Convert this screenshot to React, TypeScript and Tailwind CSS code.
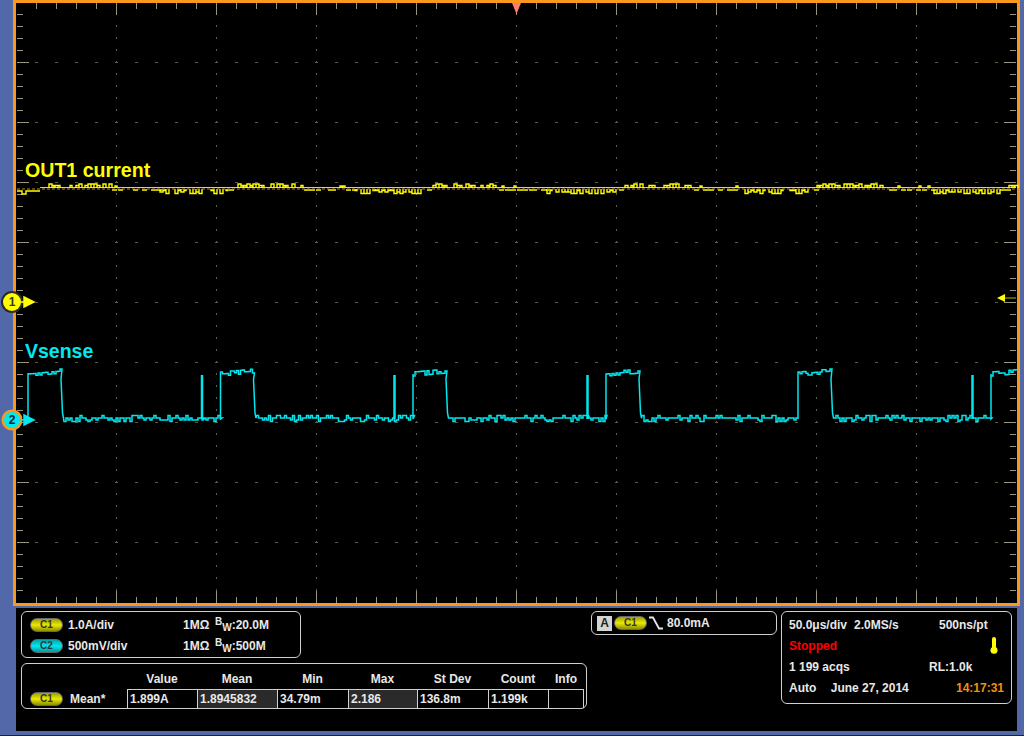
import type { ReactNode } from "react";

const font = "font-['Liberation_Sans',Arial,sans-serif]";

// repeatable noise so the traces come out the same on every load
function noise(n: number) {
  const s = Math.sin(n * 127.1 + 11.7) * 43758.5453;
  return s - Math.floor(s);
}

// yellow trace: a thin base line with short bursts above and below it
function yellowBursts() {
  let d = "M17 191H22V194H26V191H40";
  for (let x = 40; x < 1016; x += 3) {
    const p = ((x - 44) % 193 + 193) % 193;
    const r = noise(x);
    const w = r > 0.5 ? 3 : 2;
    if (p < 66) {
      if (r > 0.3) {
        const y = r > 0.7 ? 184 : 185.5;
        d += `M${x} 188V${y}H${x + w}V188`;
      }
    } else if (p >= 116 && p < 184) {
      if (r > 0.25) {
        const y = r > 0.7 ? 193.5 : r > 0.45 ? 192 : 190.5;
        d += `M${x} 189V${y}H${x + w}V189`;
      }
    } else if (r > 0.55) {
      d += `M${x} 190H${x + w + 2}`;
    } else if (r < 0.1) {
      d += `M${x} 188V186H${x + 2}V188`;
    }
  }
  return d;
}

const rises = [28, 220.5, 413, 606, 798, 991];

function lowLevel(x: number) {
  const r = noise(x + 500);
  return r > 0.84 ? 415.5 : r > 0.7 ? 421.5 : r > 0.56 ? 420 : 418;
}

function cyanPath() {
  let d = "M28 419L28 373";
  for (let i = 0; i < rises.length; i++) {
    const start = rises[i];
    const fall = start + 33;
    const end = Math.min(fall, 1016);
    for (let x = start; x < end; x += 2) {
      const t = (x - start) / 33;
      const r = noise(x + 90);
      const y = 374 - t * 3 + (r > 0.7 ? -2 : r < 0.2 ? 2 : 0);
      d += `L${x} ${y}L${x + 2} ${y}`;
    }
    if (fall > 1016) break;
    d += `L${fall} 379L${fall + 1.5} 413L${fall + 2.5} 418`;
    const next = rises[i + 1];
    for (let x = fall + 3; x < next; x += 2) {
      const y = lowLevel(x);
      d += `L${x} ${y}L${x + 2} ${y}`;
      if (Math.abs(x - (next - 19)) < 1) d += `M${next - 19} 419L${next - 19} 375M${next - 18} 375L${next - 18} 419M${x + 2} ${y}`;
    }
    d += `L${next} 419L${next} 374`;
  }
  return d;
}

function Grid() {
  const xs = Array.from({ length: 51 }, (_, i) => 16 + i * 20);
  const ys = Array.from({ length: 51 }, (_, i) => 2 + i * 12);
  const majorX = Array.from({ length: 9 }, (_, i) => 116 + i * 100);
  const majorY = Array.from({ length: 9 }, (_, i) => 62 + i * 60);
  return (
    <g shapeRendering="crispEdges">
      {majorY.map((y) =>
        xs.slice(1, 50).map((x) => <rect key={`${x}-${y}`} x={x - 1} y={y} width={3} height={1} fill="#5f5b48" />),
      )}
      {majorX.map((x) =>
        ys.slice(1, 50).map((y) => <rect key={`${x}:${y}`} x={x} y={y - 1} width={1} height={2} fill="#5f5b48" />),
      )}
      {xs.slice(1, 50).map((x) => {
        const major = (x - 16) % 100 === 0;
        return (
          <g key={x} fill="#9c9680">
            <rect x={x} y={3} width={1} height={major ? 12 : 6} />
            <rect x={x} y={major ? 591 : 597} width={1} height={major ? 12 : 6} />
          </g>
        );
      })}
      {ys.slice(1, 50).map((y) => {
        const major = (y - 2) % 60 === 0;
        return (
          <g key={y} fill="#9c9680">
            <rect x={17} y={y} width={major ? 12 : 6} height={1} />
            <rect x={major ? 1004 : 1010} y={y} width={major ? 12 : 6} height={1} />
          </g>
        );
      })}
    </g>
  );
}

function Scope() {
  return (
    <svg className="absolute left-[-16px] top-[-3px] overflow-visible" width={1024} height={606}>
      <Grid />
      <path d="M512 3L521 3L516.5 14Z" fill="#ff7b6b" />
      <line x1={40} y1={187.5} x2={1016} y2={187.5} stroke="#e6e000" strokeWidth={1} />
      <path d={yellowBursts()} fill="none" stroke="#ffff00" strokeWidth={1.4} />
      <line x1={17} y1={189} x2={1016} y2={189} stroke="#c98a1a" strokeWidth={1} strokeDasharray="3 2" />
      <path d={cyanPath()} fill="none" stroke="#00e8f0" strokeWidth={1.5} />

      <circle cx={12} cy={302} r={11} fill="#2a2a2a" />
      <circle cx={12} cy={302} r={9} fill="#ffff00" />
      <text x={12} y={306} textAnchor="middle" fontSize={12} fill="#333" fontFamily="Liberation Sans">1</text>
      <path d="M20 302H25M24 297L34 302L24 307Z" stroke="#ffff00" strokeWidth={1.5} fill="#ffff00" />

      <circle cx={12} cy={420} r={10.5} fill="#f9981c" />
      <circle cx={12} cy={420} r={8} fill="#00e8f0" />
      <text x={12} y={424} textAnchor="middle" fontSize={12} fill="#123" fontFamily="Liberation Sans">2</text>
      <path d="M20 420H25M24 415L34 420L24 425Z" stroke="#00e8f0" strokeWidth={1.5} fill="#00e8f0" />

      <path d="M1016 298H1004" stroke="#b8b800" />
      <path d="M1005 294L997 298L1005 302Z" fill="#ffff00" />
    </svg>
  );
}

function Pill({ ch, cyan }: { ch: string; cyan?: boolean }) {
  return (
    <span
      className={`flex h-[14px] w-[33px] shrink-0 items-center justify-center rounded-full border border-[#666] text-[10px] font-bold text-[#333] ${
        cyan ? "bg-gradient-to-b from-[#00a8b0] via-[#00e8f0] to-[#009aa0]" : "bg-gradient-to-b from-[#a0a000] via-[#eaea00] to-[#8f8f00]"
      }`}
    >
      {ch}
    </span>
  );
}

function Bandwidth({ value }: { value: string }) {
  return (
    <span className="flex items-center">
      <span className="relative -top-[3px] text-[10px] leading-none">B</span>
      <span className="relative top-[3px] text-[10px] leading-none">W</span>
      <span>:{value}</span>
    </span>
  );
}

function ChannelRow({ ch, cyan, scale, bw }: { ch: string; cyan?: boolean; scale: string; bw: string }) {
  return (
    <div className="flex h-[21px] items-center">
      <Pill ch={ch} cyan={cyan} />
      <span className="ml-[5px] w-[115px]">{scale}</span>
      <span className="w-[32px]">1MΩ</span>
      <Bandwidth value={bw} />
    </div>
  );
}

const cols = "grid grid-cols-[105px_70px_80px_71px_69px_71px_60px_36px]";

function Cell({ children, dark, last }: { children?: ReactNode; dark?: boolean; last?: boolean }) {
  return (
    <div className={`flex h-[19px] items-center border-l border-t border-[#d0d0d0] pl-[2px] ${dark ? "bg-[#2a2a2a]" : ""} ${last ? "border-r" : ""}`}>
      {children}
    </div>
  );
}

function Measurements() {
  const heads = ["Value", "Mean", "Min", "Max", "St Dev", "Count", "Info"];
  return (
    <div className="h-[46px] w-[566px] rounded-[6px] border border-[#d0d0d0]">
      <div className={`${cols} h-[25px] items-center pt-[4px]`}>
        <span />
        {heads.map((h) => (
          <span key={h} className="text-center">{h}</span>
        ))}
      </div>
      <div className={cols}>
        <div className="flex h-[19px] items-center pl-[8px]">
          <Pill ch="C1" />
          <span className="ml-[7px]">Mean*</span>
        </div>
        <Cell>1.899A</Cell>
        <Cell dark>1.8945832</Cell>
        <Cell>34.79m</Cell>
        <Cell dark>2.186</Cell>
        <Cell>136.8m</Cell>
        <Cell>1.199k</Cell>
        <Cell last />
      </div>
    </div>
  );
}

function Thermometer() {
  return (
    <svg width={8} height={17} viewBox="0 0 8 17" className="mr-[6px]">
      <rect x={2} y={0} width={4} height={12} rx={2} fill="#ffff00" />
      <circle cx={4} cy={13.3} r={3.5} fill="#ffff00" />
    </svg>
  );
}

export default function App() {
  return (
    <div className={`flex h-[736px] w-[1024px] flex-col overflow-hidden bg-[#5268a8] text-[12px] font-bold leading-none text-[#e8e8e8] ${font}`}>
      <div className="relative ml-[13px] h-[606px] w-[1007px] shrink-0 border-[3px] border-[#f9981c] bg-black">
        <Scope />
        <span className="absolute left-[9px] top-[158px] text-[19.6px] text-[#ffff00]">OUT1 current</span>
        <span className="absolute left-[9px] top-[339px] text-[19.5px] text-[#00e8f0]">Vsense</span>
      </div>

      <div className="ml-[16px] mt-[2px] flex h-[123px] w-[1001px] shrink-0 items-start bg-black pl-[5px] pt-[3px]">
        <div className="flex w-[565px] flex-col gap-[5px]">
          <div className="h-[47px] w-[280px] rounded-[6px] border border-[#d0d0d0] pl-[8px] pt-[2px]">
            <ChannelRow ch="C1" scale="1.0A/div" bw="20.0M" />
            <ChannelRow ch="C2" cyan scale="500mV/div" bw="500M" />
          </div>
          <Measurements />
        </div>

        <div className="ml-[5px] flex h-[24px] w-[186px] items-center rounded-[6px] border border-[#d0d0d0] pl-[5px]">
          <span className="flex h-[15px] w-[15px] items-center justify-center bg-[#d4d4d4] text-[#222]">A</span>
          <span className="ml-[2px]"><Pill ch="C1" /></span>
          <svg width={16} height={14} viewBox="0 0 16 14" className="ml-[2px]">
            <path d="M0 1.5H4L10 12.5H14" fill="none" stroke="#e8e8e8" strokeWidth={1.8} />
          </svg>
          <span className="ml-[2px]">80.0mA</span>
        </div>

        <div className="ml-[4px] h-[93px] w-[231px] rounded-[6px] border border-[#d0d0d0] px-[7px] pt-[2px]">
          <div className="flex h-[21px] items-center">
            <span className="w-[65px]">50.0μs/div</span>
            <span className="w-[85px]">2.0MS/s</span>
            <span>500ns/pt</span>
          </div>
          <div className="flex h-[21px] items-center justify-between">
            <span className="text-[#ff0000]">Stopped</span>
            <Thermometer />
          </div>
          <div className="flex h-[21px] items-center">
            <span className="w-[140px]">1 199 acqs</span>
            <span>RL:1.0k</span>
          </div>
          <div className="flex h-[21px] items-center">
            <span className="w-[42px]">Auto</span>
            <span className="w-[126px]">June 27, 2014</span>
            <span className="text-[#f0900f]">14:17:31</span>
          </div>
        </div>
      </div>

      <div className="mt-[4px] h-px bg-[#1a2040]" />
    </div>
  );
}
